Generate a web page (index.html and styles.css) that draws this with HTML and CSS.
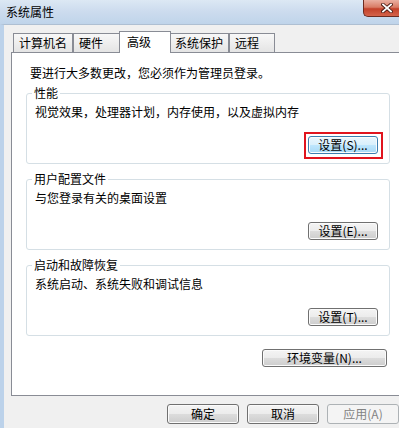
FILE: index.html
```html
<!DOCTYPE html>
<html lang="zh-CN">
<head>
<meta charset="utf-8">
<title>系统属性</title>
<link rel="stylesheet" href="styles.css">
</head>
<body>
<div class="window">
  <div class="titlebar">
    <div class="title">系统属性</div>
    <div class="close">
      <svg width="12" height="10" viewBox="0 0 12 10">
        <path d="M2 1.5 L10 8.5 M10 1.5 L2 8.5" stroke="#4a1a12" stroke-width="3.6" stroke-linecap="square"/>
        <path d="M2 1.5 L10 8.5 M10 1.5 L2 8.5" stroke="#ffffff" stroke-width="1.8" stroke-linecap="square"/>
      </svg>
    </div>
  </div>
  <div class="frame">
    <div class="tabs">
      <div class="tab t1">计算机名</div>
      <div class="tab t2">硬件</div>
      <div class="tab t3 active">高级</div>
      <div class="tab t4">系统保护</div>
      <div class="tab t5">远程</div>
    </div>
    <div class="panel">
      <div class="intro">要进行大多数更改，您必须作为管理员登录。</div>
      <fieldset class="group">
        <legend>性能</legend>
        <div class="group-body">
          <div class="desc">视觉效果，处理器计划，内存使用，以及虚拟内存</div>
          <span class="focus-ring"><button class="btn focus">设置(S)...</button></span>
        </div>
      </fieldset>
      <fieldset class="group">
        <legend>用户配置文件</legend>
        <div class="group-body">
          <div class="desc">与您登录有关的桌面设置</div>
          <button class="btn">设置(E)...</button>
        </div>
      </fieldset>
      <fieldset class="group">
        <legend>启动和故障恢复</legend>
        <div class="group-body">
          <div class="desc">系统启动、系统失败和调试信息</div>
          <button class="btn">设置(T)...</button>
        </div>
      </fieldset>
      <button class="btn env">环境变量(N)...</button>
    </div>
    <div class="footer">
      <button class="btn big">确定</button>
      <button class="btn big">取消</button>
      <button class="btn big disabled">应用(A)</button>
    </div>
  </div>
</div>
</body>
</html>
```
FILE: styles.css
```css
* { box-sizing: border-box; }
html, body { margin: 0; padding: 0; }
body {
  width: 399px;
  height: 428px;
  overflow: hidden;
  background: #f0f0f0;
  font-family: "Noto Sans CJK SC", "Noto Sans", sans-serif;
  font-size: 12px;
  color: #000;
}
.window {
  width: 399px;
  height: 428px;
  display: flex;
  flex-direction: column;
}
.titlebar {
  height: 24px;
  flex: none;
  display: flex;
  justify-content: space-between;
  align-items: flex-start;
  background: linear-gradient(180deg, #dce8f4 0%, #cddcee 45%, #bfd4ea 100%);
}
.title {
  padding-left: 6px;
  line-height: 24px;
}
.close {
  width: 36px;
  height: 17px;
  border: 1px solid #6d2b20;
  border-top: none;
  border-right: none;
  border-bottom-left-radius: 5px;
  background: linear-gradient(180deg, #eab0a2 0%, #d97c66 45%, #c3412a 55%, #d4634a 100%);
  display: flex;
  align-items: center;
  justify-content: flex-end;
  padding-right: 6px;
}
.close svg { display: block; }
.frame {
  flex: 1;
  display: flex;
  flex-direction: column;
  border-top: 1px solid #aebfd2;
  border-left: 4px solid #bcd2ea;
  padding: 6px 0 0 7px;
  background: #f0f0f0;
}
.tabs {
  display: flex;
  align-items: flex-end;
  height: 22px;
  flex: none;
  margin: 0 0 -1px 2px;
  position: relative;
  z-index: 1;
}
.tab {
  height: 19px;
  margin-bottom: 1px;
  border: 1px solid #898c95;
  border-bottom: none;
  background: linear-gradient(180deg, #f8f8f8 0%, #eeeeee 50%, #e4e4e4 100%);
  padding-left: 5px;
  line-height: 18px;
  white-space: nowrap;
}
.t1 { width: 60px; }
.t2 { width: 48px; }
.t4 { width: 60px; }
.t5 { width: 46px; }
.tab.active {
  width: 52px;
  height: 22px;
  margin: 0 -2px;
  padding-left: 7px;
  line-height: 20px;
  background: #fff;
  position: relative;
  z-index: 2;
}
.panel {
  width: 394px;
  height: 344px;
  flex: none;
  border: 1px solid #898c95;
  background: #fff;
  padding: 13px 14px 0 14px;
  display: flex;
  flex-direction: column;
}
.intro {
  padding-left: 4px;
  line-height: 14px;
  margin-bottom: 6px;
}
.group {
  margin: 0 0 8px 0;
  border: 1px solid #d5dfe5;
  border-radius: 3px;
  padding: 0 11px 9px 8px;
  min-width: 0;
}
.group legend {
  padding: 0 2px;
  margin-left: -3px;
  line-height: 14px;
}
.group-body {
  display: flex;
  flex-direction: column;
}
.desc {
  margin-top: 5px;
  line-height: 14px;
}
.btn {
  font-family: inherit;
  font-size: 12px;
  color: #000;
  height: 18px;
  width: 70px;
  padding: 0;
  line-height: 16px;
  border: 1px solid #707070;
  border-radius: 3px;
  background: linear-gradient(180deg, #f4f4f4 0%, #ececec 48%, #dcdcdc 52%, #cdcdcd 100%);
  box-shadow: inset 0 0 0 1px #fbfbfb;
  white-space: nowrap;
  display: block;
}
.group .btn {
  align-self: flex-end;
  margin-top: 17px;
}
.group .focus-ring {
  align-self: flex-end;
  display: block;
  border: 2px solid #e0141e;
  padding: 2px 3px 3px 2px;
  margin: 13px -5px -5px 0;
}
.group .focus-ring .btn {
  margin: 0;
}
.btn.focus {
  border-color: #3c7fb1;
  background: linear-gradient(180deg, #eaf6fd 0%, #d9f0fc 48%, #bee6fd 52%, #a7d9f5 100%);
}
.btn.env {
  width: 125px;
  align-self: flex-end;
  margin: 5px 3px 0 0;
}
.footer {
  display: flex;
  gap: 8px;
  margin: 8px 0 0 156px;
}
.btn.big {
  width: 73px;
  height: 20px;
  line-height: 18px;
}
.btn.disabled {
  color: #838383;
  border-color: #adb2b5;
  background: #f4f4f4;
  box-shadow: none;
}
```
